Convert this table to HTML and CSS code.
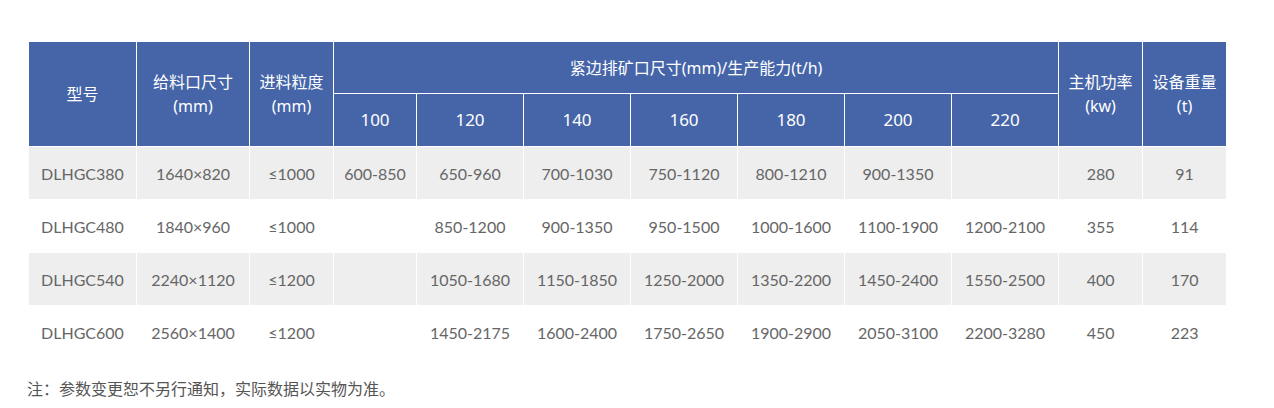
FILE: index.html
```html
<!DOCTYPE html>
<html lang="zh-CN">
<head>
<meta charset="utf-8">
<title>参数表</title>
<link rel="stylesheet" href="styles.css">
</head>
<body>
<div class="page">
  <table class="spec">
    <colgroup>
      <col class="c-model"><col class="c-feed"><col class="c-size">
      <col class="c-100"><col class="c-w"><col class="c-w"><col class="c-w"><col class="c-w"><col class="c-w"><col class="c-w">
      <col class="c-n"><col class="c-n">
    </colgroup>
    <thead>
      <tr class="h1">
        <th rowspan="2">型号</th>
        <th rowspan="2">给料口尺寸<br>(mm)</th>
        <th rowspan="2">进料粒度<br>(mm)</th>
        <th colspan="7">紧边排矿口尺寸(mm)/生产能力(t/h)</th>
        <th rowspan="2">主机功率<br>(kw)</th>
        <th rowspan="2">设备重量<br>(t)</th>
      </tr>
      <tr class="h2">
        <th>100</th><th>120</th><th>140</th><th>160</th><th>180</th><th>200</th><th>220</th>
      </tr>
    </thead>
    <tbody>
      <tr class="gray">
        <td>DLHGC380</td><td>1640×820</td><td>≤1000</td><td>600-850</td><td>650-960</td><td>700-1030</td><td>750-1120</td><td>800-1210</td><td>900-1350</td><td></td><td>280</td><td>91</td>
      </tr>
      <tr>
        <td>DLHGC480</td><td>1840×960</td><td>≤1000</td><td></td><td>850-1200</td><td>900-1350</td><td>950-1500</td><td>1000-1600</td><td>1100-1900</td><td>1200-2100</td><td>355</td><td>114</td>
      </tr>
      <tr class="gray">
        <td>DLHGC540</td><td>2240×1120</td><td>≤1200</td><td></td><td>1050-1680</td><td>1150-1850</td><td>1250-2000</td><td>1350-2200</td><td>1450-2400</td><td>1550-2500</td><td>400</td><td>170</td>
      </tr>
      <tr>
        <td>DLHGC600</td><td>2560×1400</td><td>≤1200</td><td></td><td>1450-2175</td><td>1600-2400</td><td>1750-2650</td><td>1900-2900</td><td>2050-3100</td><td>2200-3280</td><td>450</td><td>223</td>
      </tr>
    </tbody>
  </table>
  <p class="note">注：参数变更恕不另行通知，实际数据以实物为准。</p>
</div>
</body>
</html>
```
FILE: styles.css
```css
html, body {
  margin: 0;
  padding: 0;
  background: #fff;
}
.page {
  padding: 41px 0 0 28px;
}
.spec {
  border-collapse: collapse;
  table-layout: fixed;
  width: 1198px;
}
.c-model { width: 108px; }
.c-feed { width: 113px; }
.c-size { width: 84px; }
.c-100 { width: 83px; }
.c-w { width: 107px; }
.c-n { width: 84px; }
.spec th, .spec td {
  border: 1px solid #fff;
  padding: 0;
  text-align: center;
  vertical-align: middle;
}
.spec th {
  background: #4565a8;
  color: #fff;
  font-family: "Noto Sans", "Noto Sans CJK SC", sans-serif;
  font-weight: normal;
  font-size: 16px;
  line-height: 24px;
}
.h1 th { height: 51px; }
.h2 th { height: 52px; font-size: 17px; }
.spec td {
  height: 52px;
  font-family: "Lato", "Noto Sans CJK SC", sans-serif;
  font-size: 16px;
  color: #666;
}
.spec tr.gray td { background: #eeeeee; }
.note {
  margin: 18px 0 0 -1px;
  font-family: "Noto Sans CJK SC", sans-serif;
  font-size: 16px;
  color: #555;
  line-height: 22px;
}
```
